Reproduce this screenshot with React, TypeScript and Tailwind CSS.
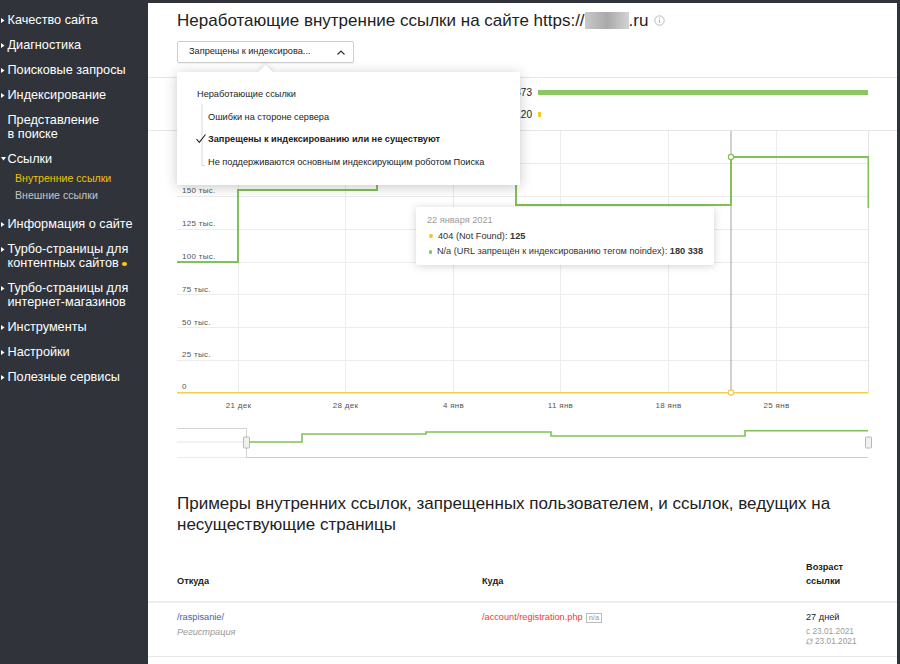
import { RefreshCw } from "lucide-react";

type MenuItem = {
  lines: string[];
  arrow?: "right" | "down";
  dot?: boolean;
  children?: { label: string; active?: boolean }[];
};

const menu: MenuItem[] = [
  { lines: ["Качество сайта"], arrow: "right" },
  { lines: ["Диагностика"], arrow: "right" },
  { lines: ["Поисковые запросы"], arrow: "right" },
  { lines: ["Индексирование"], arrow: "right" },
  { lines: ["Представление", "в поиске"] },
  {
    lines: ["Ссылки"],
    arrow: "down",
    children: [{ label: "Внутренние ссылки", active: true }, { label: "Внешние ссылки" }],
  },
  { lines: ["Информация о сайте"], arrow: "right" },
  { lines: ["Турбо-страницы для", "контентных сайтов"], arrow: "right", dot: true },
  { lines: ["Турбо-страницы для", "интернет-магазинов"], arrow: "right" },
  { lines: ["Инструменты"], arrow: "right" },
  { lines: ["Настройки"], arrow: "right" },
  { lines: ["Полезные сервисы"], arrow: "right" },
];

const gridY = [229.5, 196.5, 163.5, 131.5, 98.5, 65.5, 32.5];
const yLabels = [
  { t: "0", y: 258 },
  { t: "25 тыс.", y: 226 },
  { t: "50 тыс.", y: 194 },
  { t: "75 тыс.", y: 161 },
  { t: "100 тыс.", y: 128 },
  { t: "125 тыс.", y: 95 },
  { t: "150 тыс.", y: 62 },
];
const gridX = [61.5, 168.5, 276.5, 383.5, 491.5, 599.5];
const xLabels = ["21 дек", "28 дек", "4 янв", "11 янв", "18 янв", "25 янв"];

function Sidebar() {
  return (
    <aside className="flex w-[148px] shrink-0 flex-col gap-[11px] pt-[13px] text-[12.7px] leading-[14px] text-white">
      {menu.map((item) => (
        <div key={item.lines.join(" ")} className={item.children ? "pb-[4.5px]" : ""}>
          <div className="flex items-start">
            <span className="flex h-[14px] w-[7.5px] shrink-0 items-center pl-[1px]">
              {item.arrow === "right" && (
                <svg width="3.5" height="5" viewBox="0 0 3.5 5">
                  <path d="M0 0L3.5 2.5L0 5Z" fill="#fff" />
                </svg>
              )}
              {item.arrow === "down" && (
                <svg width="5" height="3.5" viewBox="0 0 5 3.5">
                  <path d="M0 0H5L2.5 3.5Z" fill="#fff" />
                </svg>
              )}
            </span>
            <span>
              {item.lines.map((line, i) => (
                <span key={line} className="block whitespace-nowrap">
                  {line}
                  {item.dot && i === item.lines.length - 1 && (
                    <span className="ml-[3px] inline-block h-[4px] w-[5px] rounded-full bg-[#f5c518] align-middle" />
                  )}
                </span>
              ))}
            </span>
          </div>
          {item.children && (
            <div className="mt-[6px] flex flex-col gap-[3.5px] pl-[15px] text-[10.6px] leading-[13px]">
              {item.children.map((c) => (
                <span key={c.label} className={c.active ? "text-[#f2c200]" : "text-[#c4c4c4]"}>
                  {c.label}
                </span>
              ))}
            </div>
          )}
        </div>
      ))}
    </aside>
  );
}

function Chart() {
  return (
    <svg width="692" height="283" className="ml-[29px] block" fontSize="8" fill="#555">
      {gridY.map((y) => (
        <line key={y} x1="0" x2="691.5" y1={y} y2={y} stroke="#ececec" />
      ))}
      {gridX.map((x) => (
        <line key={x} x1={x} x2={x} y1="0" y2="261" stroke="#ececec" />
      ))}
      <line x1="691.5" x2="691.5" y1="0" y2="261" stroke="#e4e4e4" />
      {yLabels.map((l) => (
        <text key={l.t} x="5" y={l.y} letterSpacing="0.3">
          {l.t}
        </text>
      ))}
      {xLabels.map((l, i) => (
        <text key={l} x={gridX[i]} y="277" textAnchor="middle" letterSpacing="0.3">
          {l}
        </text>
      ))}
      <line x1="554" x2="554" y1="0" y2="261" stroke="#a3a3a3" />
      <line x1="0" x2="691.5" y1="261.75" y2="261.75" stroke="#f2d050" strokeWidth="1.5" />
      <path
        d="M0 131H61V59H200V41H339V74H554V26H691.5V77"
        fill="none"
        stroke="#80c257"
        strokeWidth="2"
      />
      <circle cx="554" cy="26" r="2.6" fill="#fff" stroke="#80c257" strokeWidth="1.2" />
      <circle cx="554" cy="261.5" r="2.6" fill="#fff" stroke="#f2c94c" strokeWidth="1.2" />
    </svg>
  );
}

function Navigator() {
  return (
    <svg width="700" height="50" className="ml-[29px] block">
      <line x1="0" x2="69" y1="28" y2="28" stroke="#e6e6e6" />
      <line x1="0" x2="69" y1="43.5" y2="43.5" stroke="#f6ecbf" />
      <path d="M0 14.5H69.5V43.5" fill="none" stroke="#d2d2d2" />
      <path d="M69 28H125V20H249V18H374V22H568V16.7H691" fill="none" stroke="#80c257" strokeWidth="1.6" />
      <line x1="69" x2="691" y1="43.5" y2="43.5" stroke="#f2d050" strokeWidth="1.2" />
      <rect x="66.5" y="23" width="6" height="11" rx="1" fill="#f1f1f1" stroke="#b8b8b8" />
      <rect x="688.5" y="23" width="6" height="11" rx="1" fill="#f1f1f1" stroke="#b8b8b8" />
    </svg>
  );
}

function Dropdown() {
  return (
    <div className="absolute left-[29px] top-[69px] h-[113px] w-[343px] bg-white text-[9.2px] leading-[22.5px] text-[#222] shadow-[0_2px_12px_rgba(0,0,0,0.22)]">
      <div className="absolute -top-[5px] left-[83px] h-[11px] w-[11px] rotate-45 bg-white shadow-[-2px_-2px_4px_rgba(0,0,0,0.08)]" />
      <div className="relative bg-white pt-[11px]">
        <div className="pl-[20px]">Неработающие ссылки</div>
        <div className="pl-[31px]">Ошибки на стороне сервера</div>
        <div className="pl-[31px] font-bold">Запрещены к индексированию или не существуют</div>
        <div className="pl-[31px]">Не поддерживаются основным индексирующим роботом Поиска</div>
        <svg width="12" height="70" className="absolute left-[18px] top-[32px]">
          <path d="M7 0V61.5H10" fill="none" stroke="#d8d8d8" />
          <path d="M1.5 35L4.3 38.3L10.5 30.5" fill="none" stroke="#222" strokeWidth="1.1" />
        </svg>
      </div>
    </div>
  );
}

function Tooltip() {
  return (
    <div className="absolute left-[268px] top-[204px] h-[58px] w-[298px] rounded-[2px] bg-white px-[11px] pt-[6px] text-[9.2px] leading-[15.5px] text-[#333] shadow-[0_1px_8px_rgba(0,0,0,0.18)]">
      <div className="text-[#9a9a9a]">22 января 2021</div>
      <div className="flex items-center">
        <span className="ml-[2px] mr-[5px] h-[4px] w-[4px] rounded-full bg-[#f5c518]" />
        404 (Not Found):&nbsp;<b>125</b>
      </div>
      <div className="flex items-center whitespace-nowrap">
        <span className="ml-[2px] mr-[5px] h-[4px] w-[4px] rounded-full bg-[#80c257]" />
        N/a (URL запрещён к индексированию тегом noindex):&nbsp;<b>180 338</b>
      </div>
    </div>
  );
}

export default function App() {
  return (
    <div className="flex h-[664px] w-[900px] overflow-hidden bg-[#30343a] font-['Liberation_Sans',Arial,sans-serif]">
      <Sidebar />
      <main className="relative mt-[3px] mr-[3px] flex-1 overflow-hidden bg-white">
        <header className="border-b border-[#e6e6e6] px-[29px] pt-[6.5px] pb-[14px]">
          <h1 className="flex items-center whitespace-nowrap text-[17px] leading-[22px] text-[#222]">
            Неработающие внутренние ссылки на сайте https://
            <span className="h-[17px] w-[44px] bg-linear-to-r from-[#c9c9c9] via-[#a9a9a9] to-[#d3d3d3] blur-[0.6px]" />
            .ru
            <svg width="11" height="11" viewBox="0 0 11 11" className="ml-[6px]">
              <circle cx="5.5" cy="5.5" r="4.7" fill="none" stroke="#b9b9b9" />
              <line x1="5.5" x2="5.5" y1="4.6" y2="8" stroke="#b9b9b9" strokeWidth="1.1" />
              <circle cx="5.5" cy="3.2" r="0.65" fill="#b9b9b9" />
            </svg>
          </h1>
          <button className="mt-[9.5px] flex h-[22px] w-[177px] items-center justify-between rounded-[2px] border border-[#cfcfcf] pl-[11px] pr-[8px] text-[9.2px] text-[#222] shadow-[0_1px_1px_rgba(0,0,0,0.06)]">
            <span>Запрещены к индексирова...</span>
            <svg width="8" height="5" viewBox="0 0 8 5">
              <path d="M0.5 4.5L4 1L7.5 4.5" stroke="#333" fill="none" strokeWidth="1.2" />
            </svg>
          </button>
        </header>

        <div className="border-b border-[#e6e6e6] px-[29px] pt-[3px] pb-[5px] text-[10px] text-[#222]">
          <div className="flex h-[22px] items-center">
            <span className="w-[355px] shrink-0 text-right">180 373</span>
            <span className="ml-[6px] h-[5px] flex-1 bg-[#8bc864]" />
          </div>
          <div className="flex h-[22px] items-center">
            <span className="w-[355px] shrink-0 text-right">120</span>
            <span className="ml-[6px] h-[5px] w-[3px] bg-[#f7c928]" />
          </div>
        </div>

        <Chart />
        <Navigator />

        <h2 className="mt-[28.5px] px-[29px] text-[17px] leading-[21px] text-[#222]">
          Примеры внутренних ссылок, запрещенных пользователем, и ссылок, ведущих на несуществующие страницы
        </h2>

        <div className="mt-[25.5px]">
          <div className="grid grid-cols-[305px_324px_1fr] items-end border-b-2 border-[#eeeeee] pb-[13px] pl-[29px] text-[9.2px] font-bold leading-[14px] text-[#222]">
            <div>Откуда</div>
            <div>Куда</div>
            <div>
              Возраст
              <br />
              ссылки
            </div>
          </div>
          <div className="grid grid-cols-[305px_324px_1fr] border-b border-[#e8e8e8] pt-[7px] pb-[10px] pl-[29px] text-[9.2px] leading-[15px]">
            <div>
              <div className="text-[#3d5fb5]">/raspisanie/</div>
              <div className="italic text-[#9a9a9a]">Регистрация</div>
            </div>
            <div className="flex items-start">
              <span className="text-[#ee3a3a]">/account/registration.php</span>
              <span className="ml-[3px] mt-[3px] border border-[#bbbbbb] px-[2px] text-[7.5px] leading-[8px] text-[#999]">
                n/a
              </span>
            </div>
            <div className="leading-[14px] text-[#222]">
              <div>27 дней</div>
              <div className="mt-[2px] text-[8.3px] leading-[10px] text-[#9a9a9a]">
                <div>с 23.01.2021</div>
                <div className="flex items-center gap-[2px]">
                  <RefreshCw size={7} strokeWidth={2.5} />
                  23.01.2021
                </div>
              </div>
            </div>
          </div>
        </div>

        <Dropdown />
        <Tooltip />
      </main>
    </div>
  );
}
